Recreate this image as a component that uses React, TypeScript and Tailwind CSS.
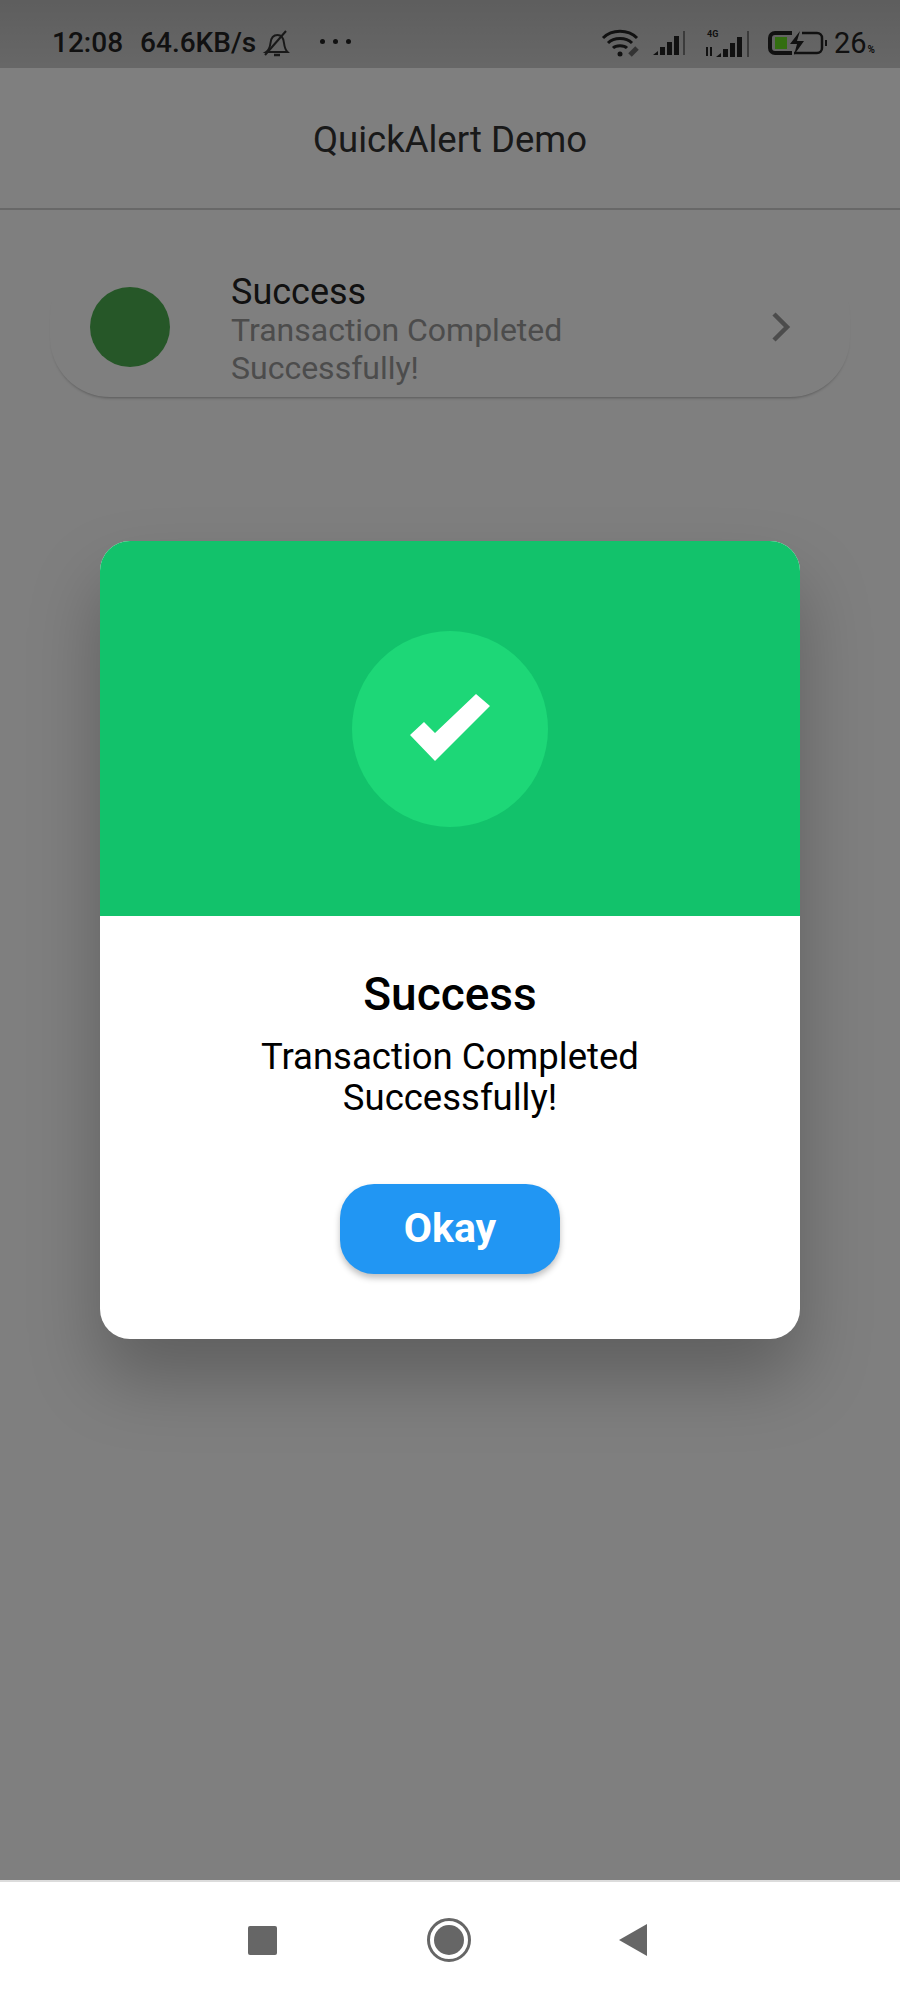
export default function App() {
  return (
    <div className="relative flex h-[2000px] w-[900px] flex-col overflow-hidden bg-white font-['Roboto',sans-serif]">
      <div className="relative flex h-[1880px] flex-col bg-[#fefefe]">
        <div className="flex h-[68px] items-center bg-gradient-to-b from-[#bcbcbc] to-[#cfcfcf] pl-[52px] pr-[25px] pt-[18px] text-[#222]">
          <span className="text-[28px] font-medium leading-none">12:08</span>
          <span className="ml-[17px] text-[28px] font-medium leading-none">64.6KB/s</span>
          <svg className="ml-[6px]" width="30" height="30" viewBox="0 0 30 30" fill="none" stroke="#333" strokeWidth="2">
            <path d="M4 24c3-2 4-5 4.500-9 .5-5 3-8 7-8s6 3 6.500 8c.5 4 1.500 7 3.500 9z" />
            <path d="M3 27 24 3" />
            <path d="M12 27h6" strokeWidth="2.500" />
          </svg>
          <div className="ml-[28px] mb-[4px] flex gap-[8px]">
            <span className="h-[5px] w-[5px] rounded-full bg-[#222]" />
            <span className="h-[5px] w-[5px] rounded-full bg-[#222]" />
            <span className="h-[5px] w-[5px] rounded-full bg-[#222]" />
          </div>
          <div className="ml-auto flex items-center">
            <svg width="40" height="28" viewBox="0 0 40 28" fill="none" stroke="#222" strokeWidth="3">
              <path d="M2 9c9-9 25-9 34 0" />
              <path d="M7 14c6-6 18-6 24 0" />
              <path d="M12 19c3-3 11-3 14 0" />
              <circle cx="19" cy="25" r="2.500" fill="#222" stroke="none" />
              <path d="M29 26l7-7" stroke="#666" strokeWidth="5" />
            </svg>
            <svg className="ml-[11px]" width="34" height="26" viewBox="0 0 34 26" fill="#222">
              <path d="M1 25h5v-4z" />
              <rect x="8" y="17" width="5" height="8" />
              <rect x="15" y="12" width="5" height="13" />
              <rect x="22" y="6" width="5" height="19" />
              <rect x="31" y="1" width="2" height="24" fill="#777" />
            </svg>
            <svg className="ml-[19px]" width="48" height="30" viewBox="0 0 48 30" fill="#222">
              <text x="2" y="9" fontSize="9" fontWeight="700" fontFamily="Roboto, sans-serif">4G</text>
              <rect x="1" y="19" width="2" height="9" />
              <rect x="5" y="19" width="2" height="9" />
              <path d="M11 29h5v-4z" />
              <rect x="18" y="21" width="5" height="8" />
              <rect x="25" y="15" width="5" height="14" />
              <rect x="32" y="9" width="5" height="20" />
              <rect x="42" y="3" width="2" height="26" fill="#777" />
            </svg>
            <svg className="ml-[15px]" width="60" height="26" viewBox="0 0 60 26" fill="none">
              <path d="M24 3H7a5 5 0 0 0-5 5v10a5 5 0 0 0 5 5h17" stroke="#222" strokeWidth="4" />
              <path d="M34 3h15a5 5 0 0 1 5 5v10a5 5 0 0 1-5 5H26" stroke="#222" strokeWidth="2.500" />
              <rect x="7" y="7" width="12" height="12" fill="#66dd22" />
              <path d="M32 1 22 14h7l-3 11 10-14h-7z" fill="#222" />
              <rect x="57" y="10" width="2" height="6" fill="#222" />
            </svg>
            <span className="ml-[6px] text-[29px] leading-none">26</span>
            <span className="ml-[1px] self-end pb-[3px] text-[10px] font-bold leading-none">%</span>
          </div>
        </div>

        <div className="flex h-[142px] items-center justify-center border-b-2 border-[#d0d0d0] pt-[5px] text-[36.500px] text-[#333]">
          QuickAlert Demo
        </div>

        <div className="mx-[50px] mt-[46px] flex h-[141px] items-center rounded-[60px] pl-[40px] pr-[58px] pt-[6px] shadow-[0_3px_3px_-2px_rgba(0,0,0,0.3)]">
          <div className="mb-[6px] h-[80px] w-[80px] shrink-0 rounded-full bg-[#4caf50]" />
          <div className="ml-[61px] flex-1">
            <div className="text-[36px] leading-[38px] text-[#222]">Success</div>
            <div className="w-[350px] text-[32px] leading-[38px] text-[#999]">Transaction Completed Successfully!</div>
          </div>
          <svg className="mb-[6px]" width="22" height="32" viewBox="0 0 22 32" fill="none" stroke="#999" strokeWidth="4.500">
            <path d="M4 3l13 13L4 29" />
          </svg>
        </div>

        <div className="absolute inset-0 flex items-center justify-center bg-black/50">
          <div className="flex h-[798px] w-[700px] flex-col overflow-hidden rounded-[30px] bg-white shadow-[0_40px_70px_rgba(0,0,0,0.25)]">
            <div className="flex h-[375px] shrink-0 items-center justify-center bg-[#12c26b]">
              <div className="flex h-[196px] w-[196px] items-center justify-center rounded-full bg-[#1dd777]">
                <svg width="80" height="70" viewBox="0 0 80 70" fill="white">
                  <path d="M0 41 14 28 25 39 66 0 80 12 25 67z" />
                </svg>
              </div>
            </div>
            <div className="flex flex-col items-center pt-[48px] text-black">
              <div className="text-[46px] font-medium leading-[60px]">Success</div>
              <div className="mt-[12px] w-[420px] text-center text-[36.500px] leading-[41px]">Transaction Completed Successfully!</div>
              <button className="mt-[66px] h-[90px] w-[220px] rounded-[34px] bg-[#2196f3] text-[41px] font-bold text-white shadow-[0_4px_6px_rgba(0,0,0,0.25)]">
                Okay
              </button>
            </div>
          </div>
        </div>
      </div>

      <div className="flex h-[120px] items-center justify-center border-t-2 border-[#dcdcdc] pb-[2px] pr-[5px]">
        <div className="h-[29px] w-[29px] rounded-[2px] bg-[#666]" />
        <div className="ml-[150px] flex h-[44px] w-[44px] items-center justify-center rounded-full border-[3px] border-[#666]">
          <div className="h-[30px] w-[30px] rounded-full bg-[#666]" />
        </div>
        <svg className="ml-[147px]" width="30" height="34" viewBox="0 0 30 34" fill="#666">
          <path d="M1 17 29 1v32z" />
        </svg>
      </div>
    </div>
  );
}
